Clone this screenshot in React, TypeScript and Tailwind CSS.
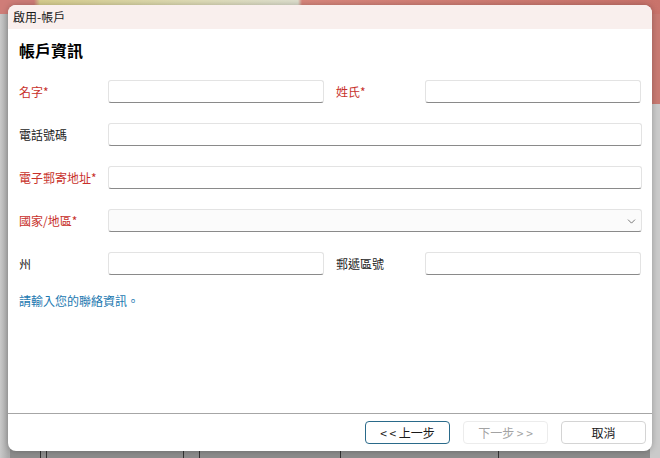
import { ChevronDown } from "lucide-react";

const font = { fontFamily: '"Noto Sans CJK TC", "Noto Sans", sans-serif' };

const Field = ({ wide = false, select = false }: { wide?: boolean; select?: boolean }) => (
  <div
    className={`relative h-[23px] rounded-[3px] border border-[#e3e3e3] border-b-[#8a8a8a] ${
      select ? "bg-[#fbfbfb]" : "bg-white"
    } ${wide ? "flex-1" : "w-[216px]"}`}
  >
    {select && (
      <ChevronDown className="absolute right-[3px] top-[5px] text-[#444]" size={13} strokeWidth={1.3} />
    )}
  </div>
);

const Label = ({ text, required = false }: { text: string; required?: boolean }) => (
  <span className={`w-[89px] shrink-0 text-[12px] leading-none ${required ? "text-[#c8312b]" : "text-[#222]"}`}>
    {text}
    {required && "*"}
  </span>
);

export default function App() {
  return (
    <div
      className="relative w-[660px] h-[458px] overflow-hidden bg-[linear-gradient(90deg,#c9c9c9_0px,#ababab_8px,#8e8e8e_40px,#8e8e8e_100%)] pt-[5px] pl-[8px]"
      style={font}
    >
      {/* desktop behind the window */}
      <div className="absolute left-0 top-0 w-full h-[14px] bg-[linear-gradient(90deg,#cf7d78_0px,#cf7d78_34px,#d8cf8f_40px,#e0ddb8_200px,#dfe0cf_298px,#d9877d_302px,#c9736b_100%)]" />
      <div className="absolute right-0 top-[14px] w-[10px] h-[90px] bg-[#c87a72]" />
      <div className="absolute right-0 top-[104px] w-[10px] h-[354px] bg-[#cacaca]" />
      <div className="absolute left-[10px] bottom-0 w-[640px] h-[10px] bg-[#8c8c8c]" />
      <div className="absolute left-[40px] bottom-0 w-[1px] h-[8px] bg-[#333]" />
      <div className="absolute left-[46px] bottom-0 w-[1px] h-[8px] bg-[#333]" />
      <div className="absolute left-[183px] bottom-0 w-[1px] h-[8px] bg-[#333]" />
      <div className="absolute left-[199px] bottom-0 w-[1px] h-[8px] bg-[#333]" />
      <div className="absolute left-[340px] bottom-0 w-[1px] h-[8px] bg-[#333]" />
      <div className="absolute left-[498px] bottom-0 w-[1px] h-[8px] bg-[#333]" />

      <div className="relative flex flex-col w-[644px] h-[446px] rounded-[8px] overflow-hidden bg-white shadow-[0_0_6px_rgba(0,0,0,0.25)]">
        {/* title bar */}
        <div className="h-[24px] shrink-0 flex items-center pl-[5px] bg-[#f9efed] text-[12px] text-[#1a1a1a]">
          啟用-帳戶
        </div>

        <div className="flex-1 flex flex-col pl-[11px] pr-[10px] pt-[10px]">
          <h1 className="text-[16px] font-bold leading-[22px] text-black">帳戶資訊</h1>

          <div className="flex flex-col gap-[20px] mt-[19px]">
            <div className="flex items-center">
              <Label text="名字" required />
              <Field />
              <div className="w-[12px]" />
              <Label text="姓氏" required />
              <Field />
            </div>
            <div className="flex items-center">
              <Label text="電話號碼" />
              <Field wide />
            </div>
            <div className="flex items-center">
              <Label text="電子郵寄地址" required />
              <Field wide />
            </div>
            <div className="flex items-center">
              <Label text="國家/地區" required />
              <Field wide select />
            </div>
            <div className="flex items-center">
              <Label text="州" />
              <Field />
              <div className="w-[12px]" />
              <Label text="郵遞區號" />
              <Field />
            </div>
          </div>

          <p className="mt-[20px] text-[12px] leading-none text-[#1b78b0]">請輸入您的聯絡資訊。</p>
        </div>

        {/* footer */}
        <div className="h-[38px] shrink-0 border-t border-[#a6a6a6] flex items-start justify-end gap-[13px] pt-[7px] pr-[6px]">
          <button className="w-[85px] h-[23px] rounded-[4px] border border-[#2a6a8a] bg-white text-[12px] text-[#1a1a1a]">
            &lt; &lt; 上一步
          </button>
          <button className="w-[85px] h-[23px] rounded-[4px] border border-[#ececec] bg-white text-[12px] text-[#a3a3a3]">
            下一步 &gt; &gt;
          </button>
          <button className="w-[85px] h-[23px] rounded-[4px] border border-[#d4d4d4] bg-white text-[12px] text-[#1a1a1a]">
            取消
          </button>
        </div>
      </div>
    </div>
  );
}
